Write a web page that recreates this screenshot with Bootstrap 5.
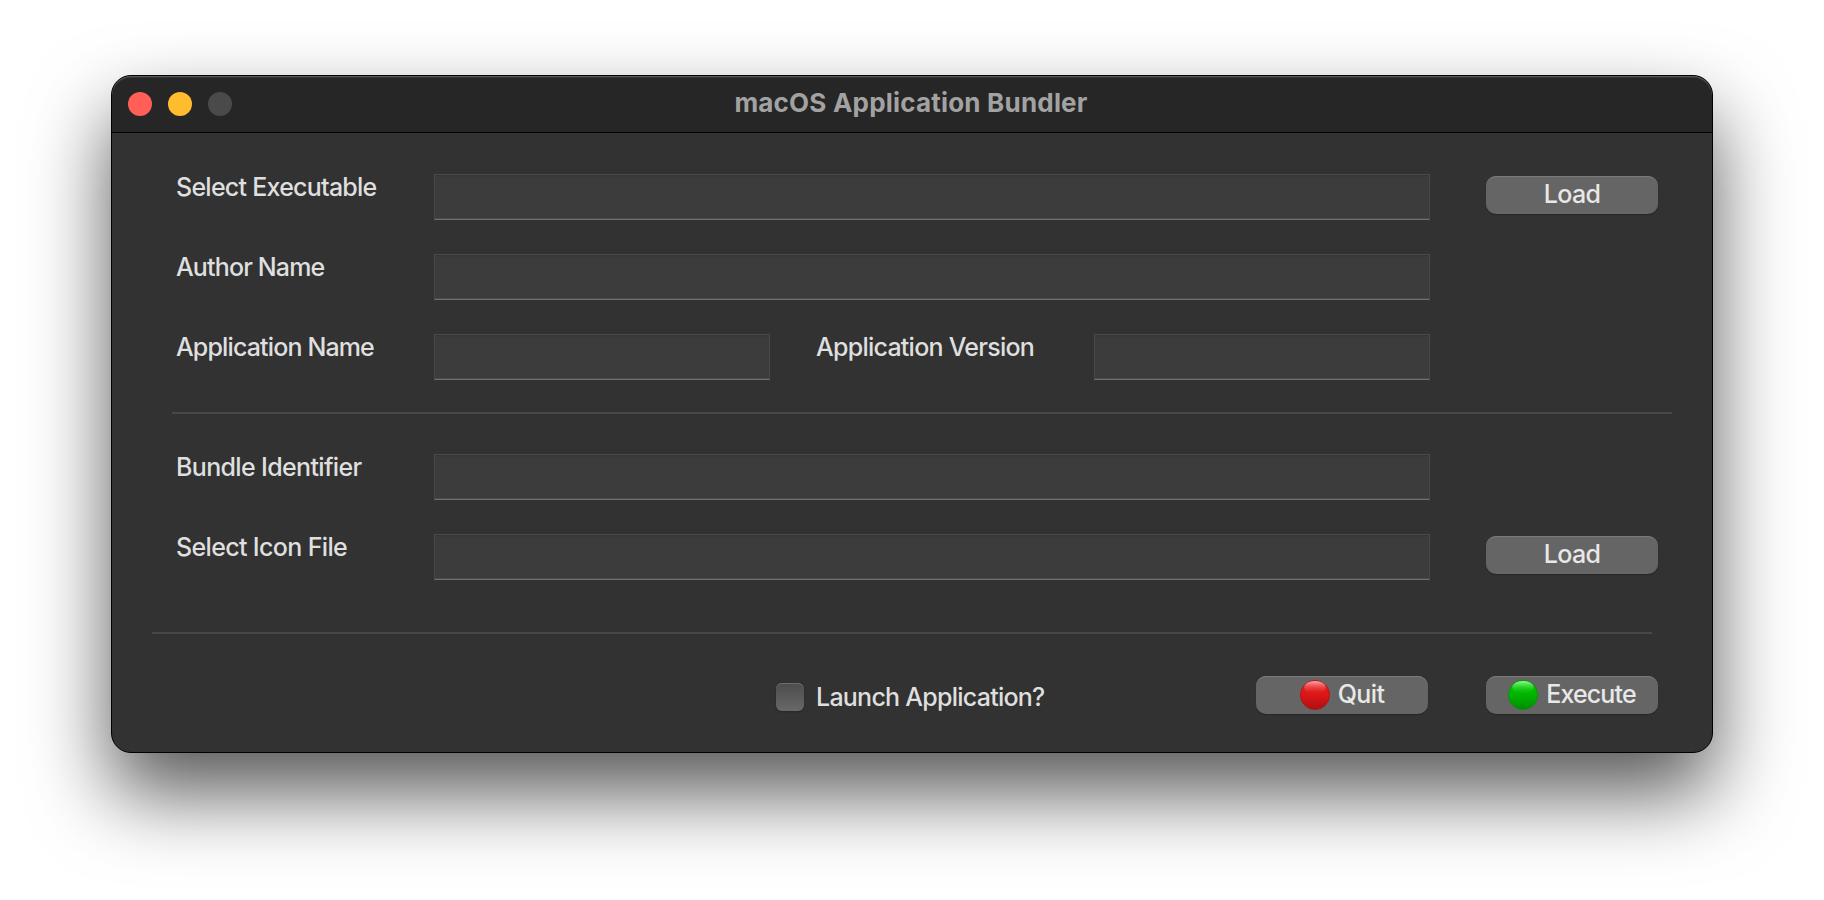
<!DOCTYPE html>
<html lang="en">
<head>
<meta charset="utf-8">
<meta name="viewport" content="width=device-width, initial-scale=1">
<title>macOS Application Bundler</title>
<link href="https://cdn.jsdelivr.net/npm/bootstrap@5.3.0/dist/css/bootstrap.min.css" rel="stylesheet">
<style>
html, body { height: 100%; }
body { background: #fff; font-family: "Inter", "Liberation Sans", sans-serif; font-size: 25px; font-weight: 450; line-height: 30px; letter-spacing: -.75px; color: #dfdfdf; overflow: hidden; }
.app-window { width: 1602px; height: 678px; margin: 75px 0 0 111px; background: #323232; border: 1px solid #000; border-radius: 20px; overflow: hidden; box-shadow: 0 40px 80px rgba(0,0,0,.66); }
.title-bar { height: 57px; background: #262626; border-bottom: 1px solid #000; border-radius: 19px 19px 0 0; box-shadow: inset 0 1px 0 #5a5a5a, inset 0 2px 0 #333; padding: 0 16px; display: grid; grid-template-columns: 104px 1fr 104px; }
.title-text { font-weight: 700; color: #a2a2a2; font-size: 26px; line-height: 30px; letter-spacing: .2px; padding: 0 2px 3px 0; }
.lights { gap: 16px; }
.light { width: 24px; height: 24px; border-radius: 50%; }
.light-close { background: #ff5f57; }
.light-min { background: #febc2e; }
.light-off { background: #4a4a4a; }
.form-area { padding-top: 41px; }
.form-line { display: grid; grid-template-columns: 258px 336px 46px 278px 336px 56px 172px; height: 46px; margin: 0 54px 34px 64px; }
.form-line.last-line { margin-bottom: 0; }
.wide-field { grid-column: 2 / 6; }
.version-label { grid-column: 4; }
.load-btn { grid-column: 7; margin-top: 2px; }
.form-line .form-control { height: 46px; border: 1px solid #4a4a4a; border-bottom-color: #727272; border-radius: 0; background: #3c3c3c; padding: 0 8px; color: #dfdfdf; box-shadow: inset 0 2px 2px -1px #363636, inset 0 -1px 0 #4a4a4a; }
.field-label { white-space: nowrap; margin-top: -2px; }
.tighter { letter-spacing: -.86px; }
.looser { letter-spacing: -.65px; }
.mac-btn, .mac-btn:hover { width: 172px; height: 38px; background: #656565; border: 0; border-radius: 10px; color: #e8e8e8; font-size: 25px; font-weight: 450; line-height: 30px; letter-spacing: -.6px; padding: 0 0 2px; box-shadow: inset 0 1px 0 #7b7b7b, 0 1px 1px #272727; }
.mac-btn svg { width: 30px; height: 30px; margin: 1px 8px 0 0; }
.rule { height: 2px; background: #484848; width: 1500px; }
.rule-top { margin: 32px 0 40px 60px; }
.rule-bottom { margin: 52px 0 42px 40px; }
.footer-line { display: grid; grid-template-columns: 480px 172px 58px 172px; margin-left: 664px; }
.quit-btn { grid-column: 2; }
.mac-btn.run-btn { grid-column: 4; letter-spacing: -.88px; }
.mac-check.form-check-input { width: 28px; height: 28px; margin: 7px 0 0; border: 0; border-radius: 6px; background: linear-gradient(#4c4c4c, #686868); box-shadow: inset 0 1px 0 #6c6c6c, 0 1px 2px #262626; }
.check-label { margin: 6px 0 0 12px; }
</style>
</head>
<body>
<main class="app-window">
  <header class="title-bar align-items-center">
    <div class="lights d-flex">
      <span class="light light-close"></span><span class="light light-min"></span><span class="light light-off"></span>
    </div>
    <div class="title-text text-center">macOS Application Bundler</div>
  </header>
  <form class="form-area">
    <div class="form-line">
      <label class="field-label" for="exe">Select Executable</label>
      <input id="exe" class="form-control wide-field" type="text">
      <button type="button" class="btn mac-btn load-btn">Load</button>
    </div>
    <div class="form-line">
      <label class="field-label tighter" for="author">Author Name</label>
      <input id="author" class="form-control wide-field" type="text">
    </div>
    <div class="form-line last-line">
      <label class="field-label tighter" for="app">Application Name</label>
      <input id="app" class="form-control" type="text">
      <label class="field-label version-label" for="ver">Application Version</label>
      <input id="ver" class="form-control" type="text">
    </div>
    <div class="rule rule-top"></div>
    <div class="form-line">
      <label class="field-label looser" for="bundle">Bundle Identifier</label>
      <input id="bundle" class="form-control wide-field" type="text">
    </div>
    <div class="form-line last-line">
      <label class="field-label looser" for="icon">Select Icon File</label>
      <input id="icon" class="form-control wide-field" type="text">
      <button type="button" class="btn mac-btn load-btn">Load</button>
    </div>
    <div class="rule rule-bottom"></div>
    <div class="footer-line">
      <div class="d-flex align-items-start">
        <input id="launch" class="form-check-input mac-check" type="checkbox">
        <label class="check-label" for="launch">Launch Application?</label>
      </div>
      <button type="button" class="btn mac-btn quit-btn d-flex align-items-center justify-content-center">
        <svg viewBox="0 0 30 30"><defs>
          <linearGradient id="redBody" x1="0" y1="0" x2="0" y2="1"><stop offset="0" stop-color="#e02020"/><stop offset=".5" stop-color="#dc1616"/><stop offset="1" stop-color="#ac1010"/></linearGradient>
          <linearGradient id="redShine" x1="0" y1="0" x2="0" y2="1"><stop offset="0" stop-color="#ffa8a8"/><stop offset="1" stop-color="#e83030" stop-opacity="0"/></linearGradient></defs>
          <circle cx="15" cy="15" r="14.6" fill="url(#redBody)" stroke="#b01414" stroke-width=".8"/>
          <ellipse cx="15" cy="7.5" rx="10.8" ry="6.6" fill="url(#redShine)"/></svg>Quit</button>
      <button type="button" class="btn mac-btn run-btn d-flex align-items-center justify-content-center">
        <svg viewBox="0 0 30 30"><defs>
          <linearGradient id="greenBody" x1="0" y1="0" x2="0" y2="1"><stop offset="0" stop-color="#00c400"/><stop offset=".5" stop-color="#00b400"/><stop offset="1" stop-color="#008c00"/></linearGradient>
          <linearGradient id="greenShine" x1="0" y1="0" x2="0" y2="1"><stop offset="0" stop-color="#90ff90"/><stop offset="1" stop-color="#10d010" stop-opacity="0"/></linearGradient></defs>
          <circle cx="15" cy="15" r="14.6" fill="url(#greenBody)" stroke="#0b8f0b" stroke-width=".8"/>
          <ellipse cx="15" cy="7.5" rx="10.8" ry="6.6" fill="url(#greenShine)"/></svg>Execute</button>
    </div>
  </form>
</main>
<script src="https://cdn.jsdelivr.net/npm/bootstrap@5.3.0/dist/js/bootstrap.bundle.min.js"></script>
</body>
</html>
